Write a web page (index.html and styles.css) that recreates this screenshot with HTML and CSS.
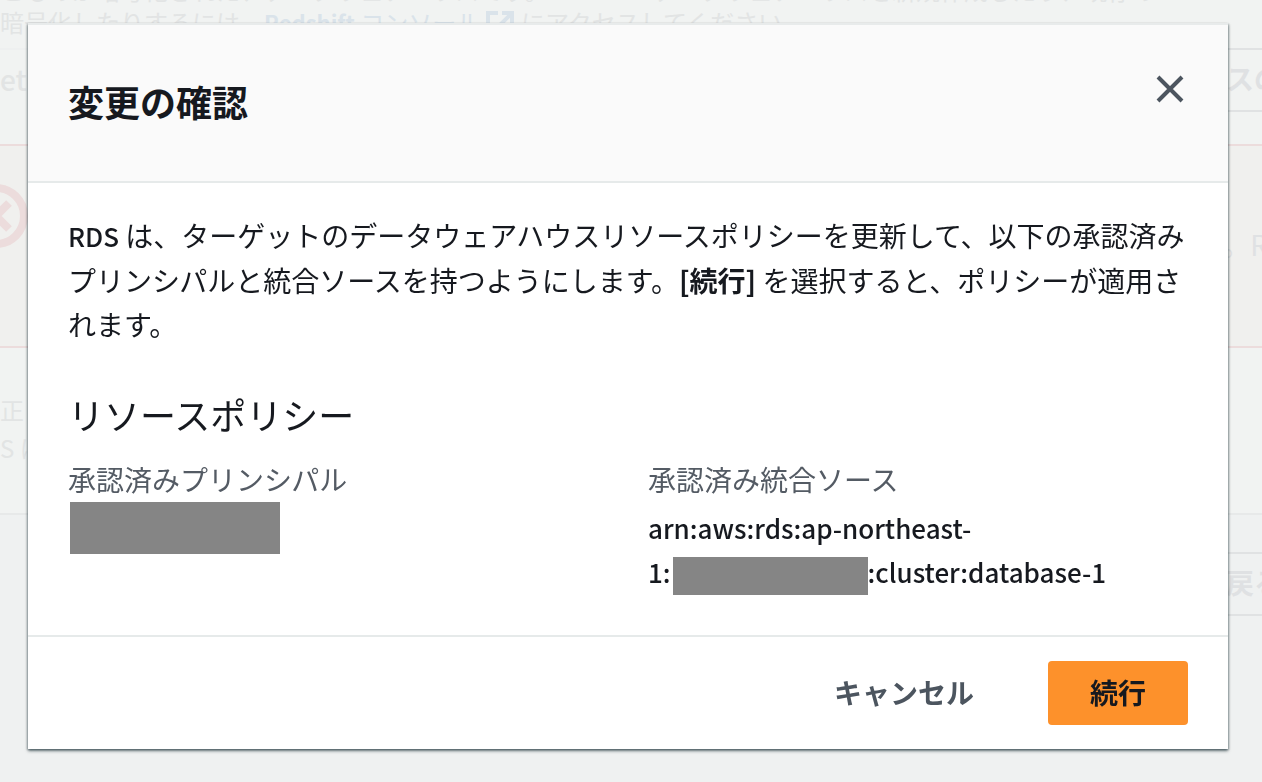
FILE: index.html
```html
<!DOCTYPE html>
<html lang="ja">
<head>
<meta charset="utf-8">
<title>変更の確認</title>
<link rel="stylesheet" href="styles.css">
</head>
<body>
<main class="page" inert>
  <p class="intro">こものが暗号化された、データウェアハウスです。<b>Redshift</b> データウェアハウスを新規作成したり、既存の <b>Redshift</b><br>暗号化したりするには、<a class="intro-link" href="#"><span class="latin-small">Redshift</span> コンソール <svg class="external" viewBox="0 0 28 28" aria-hidden="true"><path d="M12 2H2v24h24V16M16 2h10v10M26 2L12 16" fill="none" stroke="currentColor" stroke-width="4"/></svg></a> にアクセスしてください。</p>
  <div class="strip strip-top"><span class="strip-name">etl</span><button class="ghost" type="button">スの</button></div>
  <section class="alert">
    <svg class="alert-icon" viewBox="0 0 64 64" aria-hidden="true"><circle cx="32" cy="32" r="28" fill="none" stroke="currentColor" stroke-width="8"/><path d="M19 19l26 26M45 19L19 45" stroke="currentColor" stroke-width="8"/></svg>
    <span class="alert-text">。R</span>
  </section>
  <section class="option">
    <p class="option-title">正</p>
    <p class="option-note">S は</p>
  </section>
  <div class="strip strip-bottom"><button class="ghost" type="button">戻る</button></div>
</main>
<div class="overlay">
  <section class="modal" role="dialog" aria-modal="true" aria-labelledby="modal-title">
    <header class="modal-header">
      <h1 class="modal-title" id="modal-title">変更の確認</h1>
      <button class="close" type="button" aria-label="閉じる"><svg class="close-icon" viewBox="0 0 32 32" aria-hidden="true"><path d="M4 4l24 24M28 4L4 28" stroke="currentColor" stroke-width="4"/></svg></button>
    </header>
    <div class="modal-body">
      <p class="message"><span class="latin">RDS</span> は、ターゲットのデータウェアハウスリソースポリシーを更新して、以下の承認済みプリンシパルと統合ソースを持つようにします。<b>[続行]</b> を選択すると、ポリシーが適用されます。</p>
      <h2 class="subtitle">リソースポリシー</h2>
      <dl class="details">
        <div class="detail">
          <dt class="label">承認済みプリンシパル</dt>
          <dd class="value"><span class="mask mask-principal"></span></dd>
        </div>
        <div class="detail">
          <dt class="label">承認済み統合ソース</dt>
          <dd class="value latin">arn:aws:rds:ap-northeast-<br>1:<span class="mask mask-account"></span>:cluster:database-1</dd>
        </div>
      </dl>
    </div>
    <footer class="modal-footer">
      <button class="cancel" type="button">キャンセル</button>
      <button class="primary" type="button">続行</button>
    </footer>
  </section>
</div>
</body>
</html>
```
FILE: styles.css
```css
* { box-sizing: border-box; }
body {
  margin: 0;
  min-height: 100vh;
  overflow: hidden;
  background: #eff1f1;
  color: #16191f;
  font: 28px/44px "Noto Sans CJK JP", sans-serif;
}
p, h1, h2, dl, dd { margin: 0; }
button { font: inherit; cursor: pointer; }
.page { background: #f1f3f2; color: #e2e4e4; overflow: hidden; }
.intro { margin-top: -26px; font-size: 24px; line-height: 32px; white-space: nowrap; }
.intro-link { color: #dae3ea; text-decoration: none; }
.latin-small { font-size: 22px; font-weight: 700; }
.external { width: 28px; height: 28px; margin-right: 2px; vertical-align: middle; }
.strip { display: flex; align-items: center; justify-content: space-between; }
.strip-top { height: 64px; margin-top: 9px; border-top: 2px solid #eef0f0; }
.strip-name { padding-bottom: 4px; font-weight: 500; }
.ghost {
  width: 80px;
  height: 64px;
  margin-right: -40px;
  padding: 0 0 4px 2px;
  border: 2px solid #e0e2e3;
  background: transparent;
  color: #dfe1e3;
  font-weight: 700;
  text-align: left;
  white-space: nowrap;
}
.strip-top .ghost { margin-top: -2px; }
.alert {
  display: flex;
  align-items: center;
  justify-content: space-between;
  height: 204px;
  margin-top: 32px;
  padding-bottom: 4px;
  border: solid #ecdcdc;
  border-width: 2px 0;
  background: #f0f0ee;
  color: #dfe1e3;
}
.alert-icon { width: 64px; height: 64px; margin: 0 0 56px -36px; color: #ecdcdc; }
.alert-text { margin-right: -6px; }
.option { height: 167px; padding-top: 40px; border-bottom: 2px solid #e7e9e9; }
.option-title { font-size: 24px; line-height: 44px; }
.option-note { font-size: 24px; line-height: 32px; }
.strip-bottom { justify-content: flex-end; height: 268px; padding-top: 37px; align-items: flex-start; background: #eff1f1; }
.overlay { position: fixed; inset: 0; padding: 23px 34px 32px 28px; }
.modal {
  border-top: 2px solid #e8ebeb;
  background: #fff;
  box-shadow: 0 2px 3px rgba(0, 28, 36, .5), 1px 1px 2px rgba(0, 28, 36, .25), -1px 1px 2px rgba(0, 28, 36, .25);
}
.modal-header {
  display: flex;
  align-items: flex-start;
  justify-content: space-between;
  padding: 48px 40px 56px;
  border-bottom: 2px solid #e6eaea;
  background: #fafafa;
}
.modal-title { padding: 6px 0 2px; font-size: 36px; line-height: 44px; font-weight: 700; }
.close { display: flex; padding: 0; margin-right: 2px; border: 0; background: none; color: #4c555f; }
.close-icon { width: 32px; height: 32px; }
.modal-body { padding: 30px 40px 40px; }
.message { margin-right: -4px; }
.latin { font-size: 26px; font-weight: 500; }
.subtitle { margin-top: 46px; font-size: 36px; line-height: 44px; font-weight: 400; }
.details { display: grid; grid-template-columns: 1fr 1fr; gap: 40px; margin-top: 21px; }
.label { color: #545b64; }
.value { padding-top: 5px; }
.mask { display: inline-block; background: #858585; vertical-align: middle; }
.mask-principal { display: block; width: 210px; height: 52px; margin: -4px 2px 0; }
.mask-account { width: 195px; height: 38px; margin-left: 2px; }
.modal-footer {
  display: flex;
  align-items: center;
  justify-content: flex-end;
  gap: 32px;
  padding: 24px 40px;
  border-top: 2px solid #e6eaea;
}
.cancel, .primary { height: 64px; padding: 0 42px 2px; border: 0; border-radius: 4px; font-weight: 700; }
.cancel { background: none; color: #4c555f; }
.primary { background: #fd912b; color: #16191f; }
```
